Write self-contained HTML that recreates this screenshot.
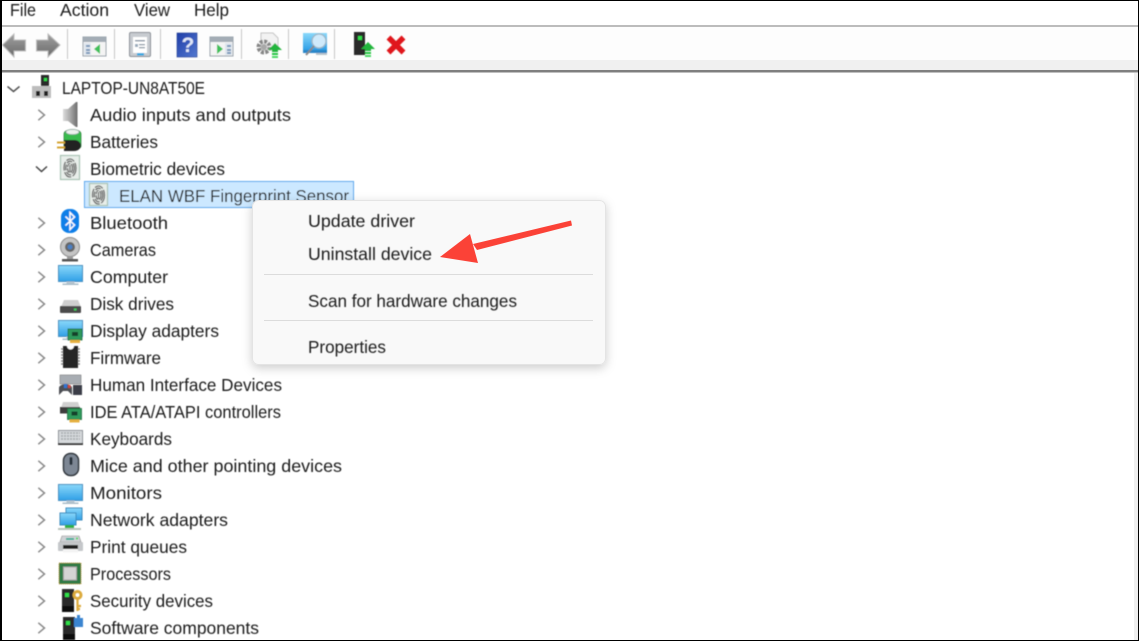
<!DOCTYPE html>
<html><head><meta charset="utf-8"><style>
html,body{margin:0;padding:0;background:#fff;width:1139px;height:641px;overflow:hidden}
svg{display:block;position:absolute;left:0;top:0}
text{font-family:"Liberation Sans",sans-serif;font-size:17.5px;fill:#1c1c1c}
.b{filter:url(#soft)}
</style></head><body>
<svg width="1139" height="641" viewBox="0 0 1139 641" xmlns="http://www.w3.org/2000/svg">
<defs>
<filter id="soft" x="-5%" y="-5%" width="110%" height="110%"><feGaussianBlur stdDeviation="0.4"/></filter>
<filter id="sh" x="-10%" y="-15%" width="120%" height="130%"><feDropShadow dx="0" dy="3" stdDeviation="5" flood-color="#000" flood-opacity=".2"/></filter>
<linearGradient id="gy" x1="0" y1="0" x2="0" y2="1"><stop offset="0" stop-color="#a0a0a0"/><stop offset="1" stop-color="#6a6a6a"/></linearGradient>
<linearGradient id="bl" x1="0" y1="0" x2="0" y2="1"><stop offset="0" stop-color="#8ad8fa"/><stop offset="1" stop-color="#2f9fe6"/></linearGradient>
<linearGradient id="hp" x1="0" y1="0" x2="1" y2="1"><stop offset="0" stop-color="#1f3ea8"/><stop offset="1" stop-color="#5378d0"/></linearGradient>
<linearGradient id="sp" x1="0" y1="0" x2="1" y2="0"><stop offset="0" stop-color="#dcdcdc"/><stop offset=".5" stop-color="#a8a8a8"/><stop offset="1" stop-color="#6e6e6e"/></linearGradient>
<g id="fp" fill="none" stroke="#686868" stroke-width="1.300">
<ellipse rx="6" ry="9" stroke-dasharray="9 1.500"/><ellipse rx="4.200" ry="6.800" stroke-dasharray="6 1.500"/><ellipse rx="2.400" ry="4.600" stroke-dasharray="5 1"/><path d="M0,-3V4"/></g>
<g id="mon"><rect x="0" y="0" width="24" height="16" fill="url(#bl)" stroke="#4a8fc0" stroke-width="1"/><rect x="8" y="16" width="8" height="2" fill="#b7c6d0"/><rect x="4" y="18" width="16" height="1.500" fill="#a9bcc8"/></g>
<g id="card"><rect x="0" y="0" width="14" height="11" fill="#2e9a5c" stroke="#1d6d3e" stroke-width=".8"/><rect x="4" y="3" width="6" height="4" fill="#173f2a"/><rect x="2" y="11" width="10" height="3" fill="#e6b040"/></g>
<g id="tw"><rect x="0" y="0" width="12" height="23" fill="#2a2a2a"/><rect x="3" y="4" width="4" height="4" fill="#2fe04a"/><rect x="0" y="17" width="12" height="6" fill="#111"/></g>
<g id="upg"><path d="M-1,6L6,-1L13,6H9V8H3V6Z" fill="#21b53c"/><rect x="3" y="9" width="6" height="2" fill="#21c63f"/><rect x="3" y="12" width="6" height="2" fill="#4cd965"/></g>
<path id="cr" d="M-3.200,-5.200L3,0L-3.200,5.200" fill="none" stroke="#8a8a8a" stroke-width="1.500"/>
</defs>

<rect width="1139" height="641" fill="#fff"/>
<!-- toolbar -->
<rect x="0" y="25" width="1139" height="2" fill="#bcbcbc"/>
<rect x="0" y="27" width="1139" height="33" fill="#fdfdfd"/>
<rect x="0" y="60" width="1139" height="10" fill="#f0f0f0"/>
<rect x="0" y="70" width="1139" height="2.500" fill="#7f7f7f"/>
<rect x="1134" y="73" width="5" height="568" fill="#efefef"/>

<g class="b">
<text x="10" y="16" textLength="26" lengthAdjust="spacingAndGlyphs">File</text>
<text x="60" y="16" textLength="49" lengthAdjust="spacingAndGlyphs">Action</text>
<text x="134" y="16" textLength="36" lengthAdjust="spacingAndGlyphs">View</text>
<text x="194" y="16" textLength="35" lengthAdjust="spacingAndGlyphs">Help</text>

<g fill="#c6c6c6"><rect x="67" y="29" width="1" height="30"/><rect x="114" y="29" width="1" height="30"/><rect x="160" y="29" width="1" height="30"/><rect x="241" y="29" width="1" height="30"/><rect x="288" y="29" width="1" height="30"/><rect x="334" y="29" width="1" height="30"/></g>

<path d="M2.500,45L14,34V40H25.500V51H14V57Z" fill="url(#gy)" stroke="#bdbdbd"/>
<path d="M60,45L48,34V40H36.500V51H48V57Z" fill="url(#gy)" stroke="#bdbdbd"/>

<g><rect x="83" y="37" width="23" height="19" fill="#f4f4f4" stroke="#98a2ac"/><rect x="83" y="37" width="23" height="5" fill="#a3acb5"/><rect x="84" y="43" width="7" height="12" fill="#dfe6ee"/><rect x="86" y="45" width="4" height="2" fill="#7b98ba"/><rect x="86" y="49" width="4" height="2" fill="#7b98ba"/><rect x="86" y="52" width="4" height="2" fill="#7b98ba"/><path d="M94,49L100,44V54Z" fill="#3fc05a"/></g>

<g><rect x="129.500" y="32.500" width="21" height="24" rx="1.500" fill="#c7cbd0" stroke="#8a8f95"/><rect x="133" y="37" width="14" height="16" fill="#fff"/><rect x="135" y="40" width="10" height="1.500" fill="#8a98a6"/><rect x="135" y="44" width="3" height="3" fill="#9ab"/><rect x="139" y="44" width="6" height="1.300" fill="#8a98a6"/><rect x="139" y="47" width="6" height="1.300" fill="#8a98a6"/><rect x="137" y="53" width="7" height="2.500" fill="#35a8e0"/></g>

<rect x="177" y="33" width="20" height="24" fill="url(#hp)" stroke="#1d3a90" stroke-width=".6"/>
<text x="181.500" y="52" style="font-size:21px;font-weight:bold;fill:#dfe6f7">?</text>

<g><rect x="210" y="37" width="23" height="19" fill="#f4f4f4" stroke="#98a2ac"/><rect x="210" y="37" width="23" height="5" fill="#a3acb5"/><rect x="225" y="43" width="7" height="12" fill="#dfe6ee"/><rect x="227" y="45" width="4" height="2" fill="#7b98ba"/><rect x="227" y="49" width="4" height="2" fill="#7b98ba"/><rect x="227" y="52" width="4" height="2" fill="#7b98ba"/><path d="M217,44L223,49L217,54Z" fill="#3fc05a"/></g>

<g><path d="M261,33H273L278,38V50H261Z" fill="#f2f2f2" stroke="#c4c4c4"/><circle cx="264" cy="47" r="5.500" fill="none" stroke="#868686" stroke-width="4" stroke-dasharray="3 1.300"/><circle cx="264" cy="47" r="3" fill="#a8a8a8"/><use href="#upg" x="269" y="44"/></g>

<g><rect x="303" y="33" width="24" height="17" fill="url(#bl)"/><path d="M303,50H327V53H303Z" fill="#2a86c8"/><circle cx="319" cy="41" r="7" fill="#cfeafb" stroke="#9db6c6" stroke-width="1.300"/><path d="M314,46L306,55" stroke="#8b8b8b" stroke-width="2"/><rect x="316" y="53" width="11" height="2" fill="#b8c4cc"/></g>

<g><rect x="354" y="32" width="11" height="23" fill="#2c2c2c"/><rect x="358" y="36" width="4" height="4" fill="#2fe04a"/><use href="#upg" x="362" y="43"/></g>

<path d="M388.500,37.500L403.500,52.500M403.500,37.500L388.500,52.500" stroke="#e0131c" stroke-width="5.500" fill="none"/>

<!-- tree root -->
<path d="M7.500,86.500L13.500,91.500L19.500,86.500" fill="none" stroke="#555" stroke-width="1.500"/>
<rect x="41" y="75" width="8" height="12" fill="#2a2a2a"/><rect x="44" y="78" width="3" height="3" fill="#2fe04a"/>
<rect x="32" y="86" width="19" height="12" fill="#bdbdbd"/><rect x="36" y="91" width="4" height="5" fill="#222"/><rect x="44" y="91" width="4" height="5" fill="#222"/>
<text x="62" y="94" textLength="143" lengthAdjust="spacingAndGlyphs">LAPTOP-UN8AT50E</text>

<!-- chevrons -->
<use href="#cr" x="41.500" y="115"/><use href="#cr" x="41.500" y="142"/>
<path d="M36,166.500L41.500,171.500L47,166.500" fill="none" stroke="#444" stroke-width="1.500"/>
<use href="#cr" x="41.500" y="223"/><use href="#cr" x="41.500" y="250"/><use href="#cr" x="41.500" y="277"/><use href="#cr" x="41.500" y="304"/><use href="#cr" x="41.500" y="331"/><use href="#cr" x="41.500" y="358"/><use href="#cr" x="41.500" y="385"/><use href="#cr" x="41.500" y="412"/><use href="#cr" x="41.500" y="439"/><use href="#cr" x="41.500" y="466"/><use href="#cr" x="41.500" y="493"/><use href="#cr" x="41.500" y="520"/><use href="#cr" x="41.500" y="547"/><use href="#cr" x="41.500" y="574"/><use href="#cr" x="41.500" y="601"/><use href="#cr" x="41.500" y="628"/>

<!-- selection -->
<rect x="84.500" y="181.500" width="269" height="26" fill="#cce8ff" stroke="#4fa6ec"/>

<!-- labels -->
<text x="90" y="121" textLength="201" lengthAdjust="spacingAndGlyphs">Audio inputs and outputs</text>
<text x="90" y="148" textLength="68" lengthAdjust="spacingAndGlyphs">Batteries</text>
<text x="90" y="175" textLength="135" lengthAdjust="spacingAndGlyphs">Biometric devices</text>
<text x="119" y="202" textLength="230" lengthAdjust="spacingAndGlyphs">ELAN WBF Fingerprint Sensor</text>
<text x="90" y="229" textLength="78" lengthAdjust="spacingAndGlyphs">Bluetooth</text>
<text x="90" y="256" textLength="66" lengthAdjust="spacingAndGlyphs">Cameras</text>
<text x="90" y="283" textLength="78" lengthAdjust="spacingAndGlyphs">Computer</text>
<text x="90" y="310" textLength="84" lengthAdjust="spacingAndGlyphs">Disk drives</text>
<text x="90" y="337" textLength="129" lengthAdjust="spacingAndGlyphs">Display adapters</text>
<text x="90" y="364" textLength="71" lengthAdjust="spacingAndGlyphs">Firmware</text>
<text x="90" y="391" textLength="192" lengthAdjust="spacingAndGlyphs">Human Interface Devices</text>
<text x="90" y="418" textLength="191" lengthAdjust="spacingAndGlyphs">IDE ATA/ATAPI controllers</text>
<text x="90" y="445" textLength="82" lengthAdjust="spacingAndGlyphs">Keyboards</text>
<text x="90" y="472" textLength="252" lengthAdjust="spacingAndGlyphs">Mice and other pointing devices</text>
<text x="90" y="499" textLength="72" lengthAdjust="spacingAndGlyphs">Monitors</text>
<text x="90" y="526" textLength="138" lengthAdjust="spacingAndGlyphs">Network adapters</text>
<text x="90" y="553" textLength="97" lengthAdjust="spacingAndGlyphs">Print queues</text>
<text x="90" y="580" textLength="81" lengthAdjust="spacingAndGlyphs">Processors</text>
<text x="90" y="607" textLength="123" lengthAdjust="spacingAndGlyphs">Security devices</text>
<text x="90" y="634" textLength="169" lengthAdjust="spacingAndGlyphs">Software components</text>

<!-- Audio -->
<path d="M63,109H68L76,102H77.500V127H76L68,121H63Z" fill="url(#sp)"/>
<!-- Batteries -->
<path d="M64,134C64,128 81,128 81,134V146C81,151 64,151 64,146Z" fill="#37bb4d" stroke="#2a7a38" stroke-width=".7"/>
<ellipse cx="72.500" cy="132" rx="6.500" ry="2.500" fill="#eef2ee" stroke="#9aa" stroke-width=".7"/>
<path d="M64,140H74C83,140 83,151 74,151H64Z" fill="#232323"/><rect x="57" y="141.500" width="8" height="2" fill="#d4a536"/><rect x="57" y="146.500" width="8" height="2" fill="#d4a536"/>
<!-- Biometric -->
<rect x="60.500" y="155.500" width="19" height="24" fill="#e8eeea" stroke="#a9c2b4" stroke-width="1.200"/><use href="#fp" x="70" y="168"/>
<rect x="89.500" y="183.500" width="18" height="22" fill="#e8eeea" stroke="#a9c2b4" stroke-width="1.200"/><use href="#fp" x="98.500" y="195"/>
<!-- Bluetooth -->
<rect x="61" y="209" width="18" height="24" rx="8" fill="#0e7fe8"/><path d="M65.500,216.500L74.500,225L70,229.500V212.500L74.500,217L65.500,225.500" fill="none" stroke="#fff" stroke-width="1.500"/>
<!-- Cameras -->
<circle cx="70" cy="247" r="9.500" fill="#c4c4c4" stroke="#8b8b8b"/><circle cx="70" cy="247" r="5" fill="#666"/><circle cx="70" cy="247" r="2.500" fill="#4a80c4"/><rect x="67" y="256" width="6" height="3" fill="#999"/><rect x="62" y="259" width="16" height="2.500" fill="#555"/>
<!-- Computer -->
<use href="#mon" x="58.500" y="265.500"/>
<!-- Disk -->
<path d="M61,307L64,300H78L81,307Z" fill="#cfcfcf"/><rect x="60" y="306" width="21" height="7" rx="1" fill="#4b4b4b"/><rect x="74" y="308.500" width="2.500" height="2" fill="#34d058"/>
<!-- Display -->
<use href="#mon" x="58.500" y="320.500"/><use href="#card" x="68" y="329"/>
<!-- Firmware -->
<path d="M61,349H80M61,352H80M61,355H80M61,358H80M61,361H80M61,364H80" stroke="#8a8a8a" stroke-width="1.500"/>
<rect x="63" y="346" width="15" height="22" fill="#262626"/><path d="M67,346A3.500,3.500 0 0 0 74,346Z" fill="#fff"/>
<!-- HID -->
<rect x="60" y="375" width="21" height="9" fill="#a8adb3" stroke="#777" stroke-width=".6"/><path d="M59,395V388C59,383 72,383 72,388V395L68,391H63Z" fill="#4d4f55"/><path d="M73,395V385H82V395Z" fill="#3b3e46"/><rect x="64" y="384" width="3" height="4" fill="#2d74d4"/><rect x="68" y="385" width="2.500" height="3" fill="#d2473c"/>
<!-- IDE -->
<path d="M61,408L63,402H78L80,408Z" fill="#d0d0d0"/><rect x="60" y="407" width="20" height="6.500" fill="#3c3c3c"/><use href="#card" x="67.500" y="408.500"/>
<!-- Keyboards -->
<rect x="58.500" y="430.500" width="24" height="14" fill="#d7dadd" stroke="#8a8f94"/><path d="M61,433H80M61,436H80M61,439H80" stroke="#a2a6aa" stroke-width="1.500" stroke-dasharray="2 1"/><rect x="58" y="443" width="25" height="2" fill="#3a3a3a"/>
<!-- Mice -->
<rect x="63.500" y="453.500" width="15" height="22" rx="7" fill="#7d8794" stroke="#2f343a" stroke-width="1.500"/><rect x="69.500" y="457" width="3" height="8" rx="1.500" fill="#26303b"/>
<!-- Monitors -->
<use href="#mon" x="58.500" y="484.500"/>
<!-- Network -->
<rect x="66" y="508" width="16" height="12" fill="url(#bl)" stroke="#3d8cbe"/><rect x="60" y="513" width="16" height="12" fill="url(#bl)" stroke="#3d8cbe"/><rect x="65" y="525" width="9" height="3.500" fill="#2eb14a"/><rect x="58" y="528" width="23" height="2" fill="#b9c4bc"/>
<!-- Print -->
<path d="M62,536H79L81,542H60Z" fill="#cfd2d5" stroke="#8b8b8b" stroke-width=".6"/><rect x="66" y="538" width="8" height="2" fill="#3fae9a"/><rect x="76" y="537.500" width="2" height="2" fill="#4cd965"/><rect x="58" y="542" width="25" height="9" rx="1" fill="#c5c7ca"/><rect x="63" y="545" width="15" height="4" fill="#222"/><rect x="63" y="549" width="15" height="3.500" fill="#f4f4f4"/>
<!-- Processors -->
<rect x="59" y="563" width="22" height="21" fill="#2f7a45" stroke="#b3983c" stroke-dasharray="1 1"/><rect x="63.500" y="567" width="13" height="13" fill="#d4d4d4" stroke="#a3a3a3"/>
<!-- Security -->
<use href="#tw" x="62" y="589"/><circle cx="77.500" cy="595" r="3.500" fill="none" stroke="#dcaa3c" stroke-width="3"/><path d="M77.500,599V611M77.500,606H81M77.500,609H80" stroke="#dcaa3c" stroke-width="2.200"/>
<!-- Software -->
<use href="#tw" x="63" y="617"/><rect x="74" y="618" width="9" height="9" fill="#3a85d0"/><rect x="77" y="615" width="3" height="4" fill="#3a85d0"/>
</g>

<!-- context menu -->
<rect x="252.500" y="200.500" width="353" height="164" rx="6" fill="#f9f9f9" stroke="#e4e4e4" filter="url(#sh)"/>
<rect x="264" y="274" width="329" height="1" fill="#dcdcdc"/>
<rect x="264" y="320" width="329" height="1" fill="#dcdcdc"/>
<g class="b">
<text x="308" y="227" textLength="107" lengthAdjust="spacingAndGlyphs">Update driver</text>
<text x="308" y="260" textLength="124" lengthAdjust="spacingAndGlyphs">Uninstall device</text>
<text x="308" y="307" textLength="209" lengthAdjust="spacingAndGlyphs">Scan for hardware changes</text>
<text x="308" y="353" textLength="78" lengthAdjust="spacingAndGlyphs">Properties</text>
</g>

<!-- red arrow -->
<path d="M571,220.500L572,225.500L477,250L473,244Z" fill="#fb4237"/>
<path d="M440,257L470,234L478,263Z" fill="#fb4237"/>

<!-- frame -->
<rect x="0" y="0" width="2" height="641" fill="#000"/>
<rect x="1138" y="0" width="1" height="641" fill="#000"/>
<rect x="0" y="0" width="1139" height="1" fill="#000"/>
<rect x="0" y="640" width="1139" height="1" fill="#000"/>
</svg>
</body></html>
